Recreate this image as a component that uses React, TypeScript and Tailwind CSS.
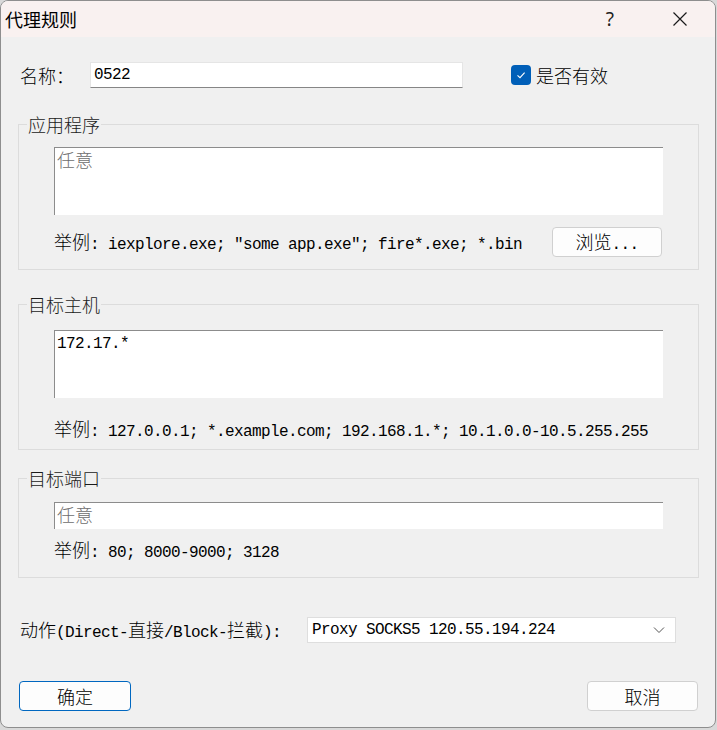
import React from 'react';

const CJK = /([\u3000-\u303f\u4e00-\u9fff\uff00-\uffef]+)/;

// 中文按 18px 宋体宽度排，西文按 9px 等宽排
function Txt({ s }: { s: string }) {
  const parts = s.split(CJK);
  return (
    <>
      {parts.map((p, i) =>
        p === '' ? null : CJK.test(p) ? (
          <span key={i} className="[font-family:'Noto_Sans_CJK_SC',sans-serif] text-[18px] font-light">
            {p}
          </span>
        ) : (
          <span key={i} className="[font-family:'Liberation_Mono',monospace] text-[16px] tracking-[-0.6px] whitespace-pre">
            {p}
          </span>
        ),
      )}
    </>
  );
}

function Group({ title, children }: { title: string; children: React.ReactNode }) {
  return (
    <fieldset className="w-[681px] border border-[#dcdcdc]">
      <legend className="ml-[8px] px-[1px] h-[20px] leading-[20px] text-[#1a1a1a]">
        <Txt s={title} />
      </legend>
      <div className="px-[35px]">{children}</div>
    </fieldset>
  );
}

function Box({ h, children, muted }: { h: string; children: React.ReactNode; muted?: boolean }) {
  return (
    <div
      className={`w-[609px] ${h} bg-white border-t border-l border-[#8c8c8c] pl-[2px] leading-[22px] ${
        muted ? 'text-[#6d6d6d]' : 'text-black'
      }`}
    >
      {children}
    </div>
  );
}

export default function App() {
  return (
    <div className="w-[717px] h-[730px] bg-[#d9d9d9]">
      <div className="w-[716px] h-[728px] rounded-[8px] border border-[#8e8e8e] overflow-hidden bg-[#f0f0f0] text-black">
        {/* title bar */}
        <div className="h-[36px] bg-[#f9f1f0] flex items-center">
          <span className="pl-[4px] text-[18px] [font-family:'Noto_Sans_CJK_SC',sans-serif] leading-none text-black">
            代理规则
          </span>
          <span className="ml-auto mr-[58px] text-[19px] [font-family:'Noto_Sans',sans-serif] leading-none text-[#222]">
            ?
          </span>
          <svg width="16" height="16" viewBox="0 0 16 16" className="mr-[27px]">
            <path d="M1.5 1.5 L14.5 14.5 M14.5 1.5 L1.5 14.5" stroke="#1a1a1a" strokeWidth="1.2" />
          </svg>
        </div>

        <div className="pl-[17px] pt-[25px]">
          {/* name row */}
          <div className="flex items-center h-[26px]">
            <div className="w-[72px] pl-[2px] leading-none">
              <Txt s="名称：" />
            </div>
            <div className="w-[373px] h-[26px] bg-white border border-[#e5e5e5] border-b-[#868686] pl-[3px] flex items-center">
              <Txt s="0522" />
            </div>
            <div className="ml-[48px] w-[20px] h-[20px] rounded-[4px] bg-[#005fb8] flex items-center justify-center">
              <svg width="12" height="12" viewBox="0 0 12 12">
                <path d="M2.5 6.3 L5 8.6 L9.6 3.6" stroke="white" strokeWidth="1.1" fill="none" />
              </svg>
            </div>
            <div className="ml-[5px] leading-none">
              <Txt s="是否有效" />
            </div>
          </div>

          {/* 应用程序 */}
          <div className="mt-[26px]">
            <Group title="应用程序">
              <div className="pt-[13px] pb-[12px]">
                <Box h="h-[68px]" muted>
                  <Txt s="任意" />
                </Box>
                <div className="mt-[12px] flex items-center h-[30px]">
                  <div className="leading-none">
                    <Txt s={'举例: iexplore.exe; ″some app.exe″; fire*.exe; *.bin'} />
                  </div>
                  <button className="ml-auto mr-[1px] w-[110px] h-[30px] rounded-[4px] border border-[#d0d0d0] bg-[#fdfdfd] leading-none">
                    <Txt s="浏览..." />
                  </button>
                </div>
              </div>
            </Group>
          </div>

          {/* 目标主机 */}
          <div className="mt-[24px]">
            <Group title="目标主机">
              <div className="pt-[16px] pb-[10px]">
                <Box h="h-[68px]">
                  <Txt s="172.17.*" />
                </Box>
                <div className="mt-[21px] leading-none h-[20px]">
                  <Txt s="举例: 127.0.0.1; *.example.com; 192.168.1.*; 10.1.0.0-10.5.255.255" />
                </div>
              </div>
            </Group>
          </div>

          {/* 目标端口 */}
          <div className="mt-[18px]">
            <Group title="目标端口">
              <div className="pt-[14px] pb-[17px]">
                <Box h="h-[27px]" muted>
                  <Txt s="任意" />
                </Box>
                <div className="mt-[11px] leading-none h-[20px]">
                  <Txt s="举例: 80; 8000-9000; 3128" />
                </div>
              </div>
            </Group>
          </div>

          {/* action */}
          <div className="mt-[39px] flex items-center h-[26px]">
            <div className="w-[289px] pl-[2px] leading-none">
              <Txt s="动作(Direct-直接/Block-拦截):" />
            </div>
            <div className="w-[369px] h-[26px] bg-white border border-[#dedede] flex items-center pl-[4px] pr-[10px]">
              <Txt s="Proxy SOCKS5 120.55.194.224" />
              <svg width="12" height="8" viewBox="0 0 12 8" className="ml-auto">
                <path d="M1 1.5 L6 6.5 L11 1.5" stroke="#555" strokeWidth="1" fill="none" />
              </svg>
            </div>
          </div>

          {/* buttons */}
          <div className="mt-[38px] flex items-center pr-[17px]">
            <button className="ml-[1px] w-[112px] h-[30px] rounded-[4px] border border-[#0067c0] bg-[#fdfdfd] leading-none">
              <Txt s="确定" />
            </button>
            <button className="ml-auto w-[111px] h-[30px] rounded-[4px] border border-[#d0d0d0] bg-[#fdfdfd] leading-none">
              <Txt s="取消" />
            </button>
          </div>
        </div>
      </div>
    </div>
  );
}
